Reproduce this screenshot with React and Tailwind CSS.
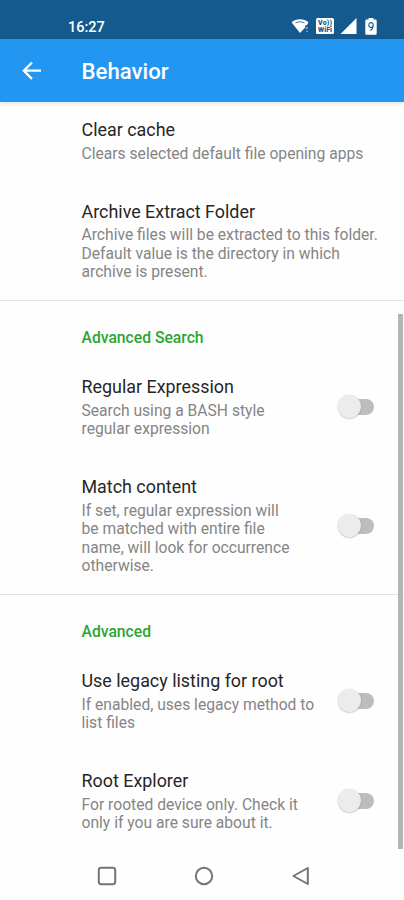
import React from "react";

function Toggle() {
  return (
    <span className="relative block h-6 w-9 shrink-0">
      <span className="absolute top-1 right-0 h-4 w-[31px] rounded-full bg-[#bdbdbd]" />
      <span className="absolute top-0 left-0 size-[23px] rounded-full bg-[#ececec] shadow-[0_0.5px_1.5px_rgba(0,0,0,0.3)]" />
    </span>
  );
}

function Preference({ title, lines, toggle }) {
  return (
    <div className="flex items-center justify-between pt-[18.75px] pr-[30px] pb-[17.95px] pl-[81.5px]">
      <div className="whitespace-nowrap">
        <div className="text-[17.9px] leading-6 text-[#262626]">{title}</div>
        <div className="mt-[2.3px] text-[15.65px] leading-[18.5px] text-[#858585]">
          {lines.map((line) => (
            <div key={line}>{line}</div>
          ))}
        </div>
      </div>
      {toggle && <Toggle />}
    </div>
  );
}

function Category({ children }) {
  return (
    <div className="flex h-[57px] items-center border-t border-[#e2e2e2] pt-[18.6px] pl-[81.5px] text-[15.7px] font-medium text-[#2ba532]">
      {children}
    </div>
  );
}

export default function App() {
  return (
    <div className="relative flex h-[900px] w-[404px] flex-col overflow-hidden bg-[#fefefe] font-['Roboto',sans-serif]">
      <div className="flex h-[39px] shrink-0 items-center bg-[#155a8e] pt-[13px] pr-[27px] pl-[68px] text-white">
        <span className="pt-1 text-[14.5px] leading-none font-medium">16:27</span>
        <div className="ml-auto flex items-center">
          <svg width="19" height="16" viewBox="0 0 19 16" fill="#fff">
            <path d="M0.5 4.2C5 .2 13 .2 17.5 4.2L15.8 7.2H14.2V9.4L9 15Z" />
            <path d="M4.5 4.8Q9 2.6 13.5 4.8" fill="none" stroke="#155a8e" strokeWidth=".8" />
            <path d="M15.3 9.2h1.5v1.4h-.8v1h-.8zM15.5 13h1.2v1h-1.2z" opacity=".7" />
          </svg>
          <svg className="ml-[6px]" width="18" height="16" viewBox="0 0 18 16">
            <rect width="18" height="16" rx="1.5" fill="#fff" />
            <g fill="#155a8e" fontFamily="Roboto" fontWeight="900" fontSize="7">
              <text x="2" y="7.2" textLength="14">Vo))</text>
              <text x="2" y="13.8" textLength="14">WiFi</text>
            </g>
          </svg>
          <svg className="ml-[6px]" width="17" height="16" viewBox="0 0 17 16">
            <path d="M16.5 0V16H.5Z" fill="#fff" />
          </svg>
          <svg className="ml-[8px]" width="12" height="17" viewBox="0 0 12 17">
            <path d="M3.5 1.5V0h5v1.5H10.5Q11.7 1.5 11.7 2.7V15.5Q11.7 16.7 10.5 16.7H1.5Q.3 16.7 .3 15.5V2.7Q.3 1.5 1.5 1.5Z" fill="#fff" />
            <path d="M8.2 7.2A2.2 2.4 0 1 0 6 9.4Q8.2 9.4 8.2 7.2Q8.2 10.6 5.4 12.6" fill="none" stroke="#155a8e" strokeWidth="1.1" />
          </svg>
        </div>
      </div>
      <header className="z-10 flex h-[63px] shrink-0 items-center bg-[#2396f2] pl-[22px] text-white shadow-[0_1px_5px_rgba(0,0,0,0.14)]">
        <svg width="20" height="20" viewBox="0 0 20 20" fill="none" stroke="#fff" strokeWidth="2.2">
          <path d="M10 1.5 1.8 9.7 10 17.9M2 9.7H19" />
        </svg>
        <h1 className="ml-[39.5px] pt-0.5 text-[22.2px] leading-none font-medium">Behavior</h1>
      </header>
      <main className="-mt-[2.3px] h-[751.3px] shrink-0">
        <Preference title="Clear cache" lines={["Clears selected default file opening apps"]} />
        <Preference
          title="Archive Extract Folder"
          lines={["Archive files will be extracted to this folder.", "Default value is the directory in which", "archive is present."]}
        />
        <Category>Advanced Search</Category>
        <Preference title="Regular Expression" lines={["Search using a BASH style", "regular expression"]} toggle />
        <Preference
          title="Match content"
          lines={["If set, regular expression will", "be matched with entire file", "name, will look for occurrence", "otherwise."]}
          toggle
        />
        <Category>Advanced</Category>
        <Preference title="Use legacy listing for root" lines={["If enabled, uses legacy method to", "list files"]} toggle />
        <Preference title="Root Explorer" lines={["For rooted device only. Check it", "only if you are sure about it."]} toggle />
      </main>
      <div className="absolute top-[314px] left-[398px] h-[535px] w-[5px] bg-[#b5b5b5]" />
      <nav className="flex flex-1 items-center justify-center gap-[77px] pl-1">
        <svg width="20" height="20" viewBox="0 0 20 20" fill="none" stroke="#757575" strokeWidth="2">
          <rect x="1.8" y="1.8" width="16.4" height="16.4" rx="2.4" />
        </svg>
        <svg width="20" height="20" viewBox="0 0 20 20" fill="none" stroke="#757575" strokeWidth="2">
          <circle cx="10" cy="10" r="8.2" />
        </svg>
        <svg width="20" height="20" viewBox="0 0 20 20" fill="none" stroke="#757575" strokeWidth="2" strokeLinejoin="round">
          <path d="M16.8 2V18L2.4 10Z" />
        </svg>
      </nav>
    </div>
  );
}
